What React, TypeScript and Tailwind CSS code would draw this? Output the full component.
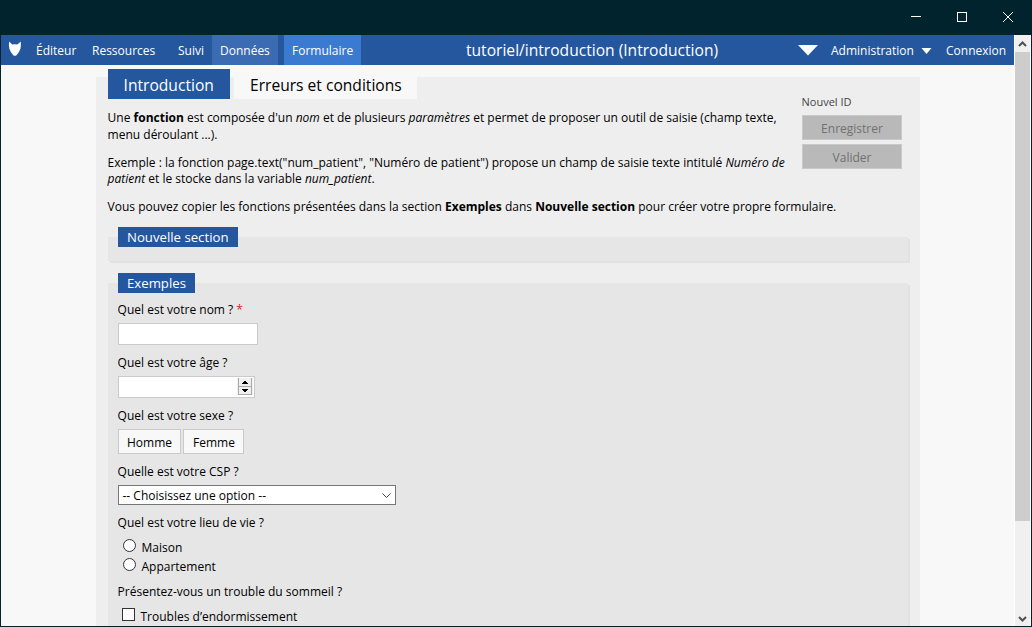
import type { ReactNode } from "react";

function Question({ children, className }: { children: ReactNode; className: string }) {
  return <div className={`-ml-[0.4px] flex h-4 items-center whitespace-nowrap ${className}`}>{children}</div>;
}

function TitleBar() {
  return (
    <header className="flex h-[35px] shrink-0 justify-end bg-[#00232e]">
      <svg width="120" height="35" fill="none" stroke="white">
        <path d="M0 16.5h10" shapeRendering="crispEdges" />
        <rect x="46.5" y="12.5" width="9" height="9" shapeRendering="crispEdges" />
        <path d="M92 12l10 10M102 12l-10 10" />
      </svg>
    </header>
  );
}

function NavBar() {
  return (
    <nav className="flex h-[30px] items-stretch bg-[#24579e] text-[12px] leading-[31px] whitespace-nowrap text-white">
      <svg width="35" height="30" fill="white" className="shrink-0">
        <path d="M8.100 6.500Q10 8.600 11.500 9.500Q13.800 9 16.100 9.500Q17.800 8.600 19.700 6.500Q20.200 9.500 19.500 13.500Q18.300 17.500 15.500 20.300Q13.900 21.300 12.300 20.300Q9.500 17.500 8.300 13.500Q7.600 9.500 8.100 6.500z" />
      </svg>
      <div className="w-[56px]">Éditeur</div>
      <div className="w-[86px]">Ressources</div>
      <div className="w-[34px]">Suivi</div>
      <div className="w-[66px] bg-[#3a6bb3] pl-2">Données</div>
      <div className="ml-1.5 w-[77px] bg-[#3b7ad1] pl-2">Formulaire</div>
      <div className="w-[436px] pl-[105px] text-[15.6px] leading-[30px]">tutoriel/introduction (Introduction)</div>
      <svg width="34" height="30" fill="white">
        <path d="M1 10h20L11 20.500z" />
      </svg>
      <div className="w-[90px]">Administration</div>
      <svg width="25" height="30" fill="white">
        <path d="M0.500 13h10l-5 6z" />
      </svg>
      <div>Connexion</div>
    </nav>
  );
}

function ScrollBar() {
  return (
    <aside className="flex w-[17px] shrink-0 flex-col border-x border-white bg-[#f0f0f0]">
      <svg width="15" height="17" fill="none" stroke="#505050" strokeWidth="2">
        <path d="M4 11l3.500-3.500L11 11" />
      </svg>
      <div className="h-[469px] bg-[#cdcdcd]" />
      <div className="flex-1" />
      <svg width="15" height="15" fill="none" stroke="#505050" strokeWidth="2">
        <path d="M4 6l3.500 3.500L11 6" />
      </svg>
    </aside>
  );
}

function Intro() {
  return (
    <div className="-ml-[0.4px] w-[694.4px] leading-4 whitespace-nowrap">
      <p className="leading-[17px]">
        Une <b>fonction</b> est composée d'un <i>nom</i> et de plusieurs <i>paramètres</i> et permet de proposer un outil de saisie (champ texte,
        <br />
        menu déroulant ...).
      </p>
      <p className="mt-3">
        Exemple : la fonction page.text("num_patient", "Numéro de patient") propose un champ de saisie texte intitulé <i>Numéro de</i>
        <br />
        <i>patient</i> et le stocke dans la variable <i>num_patient</i>.
      </p>
      <p className="mt-3">
        Vous pouvez copier les fonctions présentées dans la section <b>Exemples</b> dans <b>Nouvelle section</b> pour créer votre propre formulaire.
      </p>
    </div>
  );
}

function Actions() {
  return (
    <div className="flex w-[100px] flex-col text-[12px] text-[#717171]">
      <div className="-ml-[0.5px] h-[22px] text-[11px] leading-[18px] text-[#444]">Nouvel ID</div>
      <button className="h-[25px] border border-[#c9c9c9] bg-[#b9b9b9] pt-0.5">Enregistrer</button>
      <button className="mt-1 h-[25px] border border-[#c9c9c9] bg-[#b9b9b9] pt-0.5">Valider</button>
    </div>
  );
}

function Examples() {
  return (
    <section className="mt-[22px] flex h-[400px] w-[800px] flex-col bg-[#e6e6e6] px-2.5 shadow-[2px_2px_0_#e1e1e1]">
      <div className="-mt-2.5 h-5 w-[77px] shrink-0 bg-[#24579e] pl-[9px] text-[13.2px] leading-[21px] text-white">Exemples</div>
      <Question className="mt-[9px]">
        Quel est votre nom ?<span className="ml-[3px] text-[#e02020]">*</span>
      </Question>
      <div className="mt-[5px] h-[22px] w-[140px] border border-[#cacaca] bg-white" />
      <Question className="mt-[10px]">Quel est votre âge ?</Question>
      <div className="mt-[5px] flex h-[22px] w-[137px] justify-end border border-[#cacaca] bg-white">
        <svg width="17" height="20" shapeRendering="crispEdges">
          <path d="M0 1h16v17H0z" fill="#f0f0f0" />
          <path d="M1.500 1v16.500h13V1M1 9.500h14" fill="none" stroke="#aaa" />
          <path d="M7 4h2v1h1v1h1v1H5V6h1V5h1zM5 12h6v1h-1v1H9v1H7v-1H6v-1H5z" fill="black" />
        </svg>
      </div>
      <Question className="mt-[10px]">Quel est votre sexe ?</Question>
      <div className="mt-[5px] flex gap-0.5">
        <button className="h-[25px] w-[63px] border border-[#cacaca] bg-[#f8f8f8] pt-0.5">Homme</button>
        <button className="h-[25px] w-[61px] border border-[#cacaca] bg-[#f8f8f8] pt-0.5 pl-px">Femme</button>
      </div>
      <Question className="mt-[10px]">Quelle est votre CSP ?</Question>
      <div className="mt-[5px] flex h-5 w-[278px] items-center justify-between border border-[#767676] bg-white pr-1 pl-[3.5px]">
        <span className="pt-px">-- Choisissez une option --</span>
        <svg width="9" height="6" fill="none" stroke="#444" className="mt-px">
          <path d="M.5.5l4 4l4-4" />
        </svg>
      </div>
      <Question className="mt-[10px]">Quel est votre lieu de vie ?</Question>
      <div className="mt-[7px] flex h-[19px] items-center">
        <span className="mb-1 ml-[5px] h-[13px] w-[13px] rounded-full border border-[#333] bg-white" />
        <span className="ml-[5.5px]">Maison</span>
      </div>
      <div className="flex h-[19px] items-center">
        <span className="mb-1 ml-[5px] h-[13px] w-[13px] rounded-full border border-[#333] bg-white" />
        <span className="ml-[5.5px]">Appartement</span>
      </div>
      <Question className="mt-[8px]">Présentez-vous un trouble du sommeil ?</Question>
      <div className="mt-[7px] flex h-[19px] items-center">
        <span className="mb-1 ml-1 h-[13px] w-[13px] border border-[#333] bg-white" />
        <span className="ml-[5.5px]">Troubles d’endormissement</span>
      </div>
    </section>
  );
}

export default function App() {
  return (
    <div className="flex h-[627px] w-[1032px] flex-col overflow-hidden bg-[#00232e] px-px pb-px font-['Open_Sans',sans-serif] text-[12px] text-black">
      <TitleBar />
      <div className="flex min-h-0 flex-1 overflow-hidden">
        <div className="w-[1013px] overflow-hidden bg-[#f8f8f8]">
          <NavBar />
          <main className="mt-3 ml-[95px] h-[640px] w-[824px] bg-[#eee] pl-3">
            <div className="flex h-[22px] items-end gap-1 text-[15.6px] leading-[32px] whitespace-nowrap">
              <div className="h-[30px] w-[122px] bg-[#24579e] pl-[15.600px] text-white">Introduction</div>
              <div className="h-[30px] w-[183px] bg-[#f8f8f8] pl-4">Erreurs et conditions</div>
            </div>
            <div className="flex h-[138px]">
              <div className="pt-[10px]">
                <Intro />
              </div>
              <div className="-mt-[6px]">
                <Actions />
              </div>
            </div>
            <section className="h-6 w-[800px] bg-[#e6e6e6] pl-2.5 shadow-[2px_2px_0_#e1e1e1]">
              <div className="h-5 w-[120px] -translate-y-2.5 bg-[#24579e] pl-[9px] text-[13.2px] leading-5 text-white">Nouvelle section</div>
            </section>
            <Examples />
          </main>
        </div>
        <ScrollBar />
      </div>
    </div>
  );
}
